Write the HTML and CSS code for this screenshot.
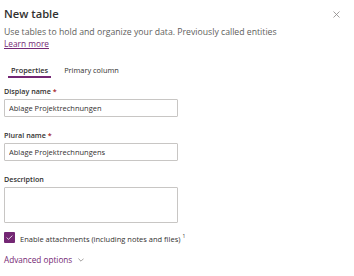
FILE: index.html
```html
<!DOCTYPE html>
<html lang="en">
<head>
    <meta charset="UTF-8">
    <meta name="viewport" content="width=device-width, initial-scale=1.0">
    <title>New table</title>
    <link rel="stylesheet" href="styles.css">
</head>
<body>
    <div class="panel">
        <div class="header">
            <h1>New table</h1>
            <button class="close" aria-label="Close">
                <svg width="7" height="7" viewBox="0 0 7 7"><path d="M0.5 0.5L6.5 6.5M6.5 0.5L0.5 6.5" stroke="#8a8886" stroke-width="0.8" fill="none"/></svg>
            </button>
        </div>
        <p class="intro">Use tables to hold and organize your data. Previously called entities</p>
        <p class="learn-row"><a class="learn" href="#">Learn more</a></p>

        <div class="tabs">
            <span class="tab active">Properties</span>
            <span class="tab">Primary column</span>
        </div>

        <div class="form-group">
            <label for="display">Display name <span class="req">*</span></label>
            <input type="text" id="display" value="Ablage Projektrechnungen">
        </div>

        <div class="form-group">
            <label for="plural">Plural name <span class="req">*</span></label>
            <input type="text" id="plural" value="Ablage Projektrechnungens">
        </div>

        <div class="form-group">
            <label for="desc">Description</label>
            <textarea id="desc"></textarea>
        </div>

        <div class="check-row">
            <span class="checkbox">
                <svg width="7" height="5" viewBox="0 0 7 5"><path d="M0.6 2.6L2.5 4.3L6.4 0.6" stroke="#fff" stroke-width="0.8" fill="none"/></svg>
            </span>
            <span>Enable attachments (including notes and files) <sup>1</sup></span>
        </div>

        <a class="advanced" href="#">Advanced options
            <svg width="6" height="4" viewBox="0 0 6 4"><path d="M0.4 0.6L3 3.2L5.6 0.6" stroke="#8a8886" stroke-width="0.8" fill="none"/></svg>
        </a>
    </div>
</body>
</html>
```
FILE: styles.css
```css
body {
    margin: 0;
    background-color: #fff;
    font-family: "Open Sans", "Noto Sans", sans-serif;
    color: #323130;
}

.panel {
    padding: 6px 4px 0 4px;
    font-size: 8px;
}

.header {
    display: flex;
    justify-content: space-between;
    align-items: center;
}

h1 {
    margin: 0;
    font-size: 11.2px;
    font-weight: 600;
    line-height: 16px;
}

.close {
    border: none;
    background: none;
    padding: 0;
    margin-right: 10px;
    display: flex;
}

.intro {
    margin: 4.5px 0 0 0;
    font-size: 8.7px;
    line-height: 11px;
    color: #605e5c;
}

.learn-row {
    margin: 0;
    font-size: 8.3px;
    line-height: 11px;
}

.learn {
    color: #742774;
}

.tabs {
    display: flex;
    gap: 10px;
    margin: 16px 0 0 4px;
}

.tab {
    font-size: 7.4px;
    line-height: 11px;
    padding: 0 3px;
    border-bottom: 2px solid transparent;
    color: #323130;
}

.tab.active {
    font-weight: 600;
    border-bottom-color: #742774;
}

.form-group {
    margin-top: 8px;
}

.form-group + .form-group {
    margin-top: 13px;
}

label {
    display: block;
    font-size: 7.2px;
    font-weight: 600;
    line-height: 11px;
    margin-bottom: 2px;
}

.req {
    color: #a4262c;
}

input[type="text"], textarea {
    display: block;
    box-sizing: border-box;
    width: 174px;
    height: 18px;
    padding: 0 4px;
    border: 1px solid #c8c6c4;
    border-radius: 1px;
    font-family: inherit;
    font-size: 7.5px;
    color: #323130;
    margin: 0;
}

textarea {
    height: 36px;
    resize: none;
}

.check-row {
    display: flex;
    align-items: center;
    gap: 5px;
    margin-top: 8.5px;
    font-size: 7.5px;
    line-height: 11px;
}

.checkbox {
    width: 11px;
    height: 11px;
    border-radius: 1px;
    background-color: #742774;
    display: flex;
    align-items: center;
    justify-content: center;
}

sup {
    font-size: 5px;
}

.advanced {
    display: inline-flex;
    align-items: center;
    gap: 6px;
    margin-top: 9px;
    font-size: 8.2px;
    line-height: 12px;
    color: #742774;
    text-decoration: none;
}
```
